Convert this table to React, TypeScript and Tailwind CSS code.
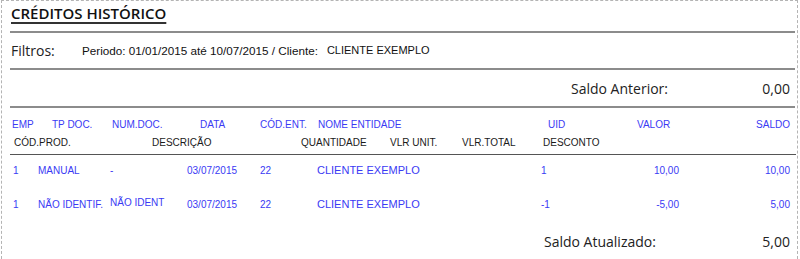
const blue = "text-[#3a3af4]";

type Col = { text: string; w?: string; cls?: string };

function Row({ cols, className }: { cols: Col[]; className?: string }) {
  return (
    <div className={`flex items-center ${className ?? ""}`}>
      {cols.map((c, i) => (
        <span key={i} className={`shrink-0 whitespace-nowrap ${c.w ?? ""} ${c.cls ?? ""}`}>
          {c.text}
        </span>
      ))}
    </div>
  );
}

function Rule() {
  return <div className="h-[2px] bg-[#8c8c8c] ml-[8px] mr-[2px]" />;
}

const rows = [
  { emp: "1", tp: "MANUAL", num: "-", data: "03/07/2015", ent: "22", nome: "CLIENTE EXEMPLO", uid: "1", valor: "10,00", saldo: "10,00", raise: false },
  { emp: "1", tp: "NÃO IDENTIF.", num: "NÃO IDENT", data: "03/07/2015", ent: "22", nome: "CLIENTE EXEMPLO", uid: "-1", valor: "-5,00", saldo: "5,00", raise: true },
];

export default function App() {
  return (
    <div className="w-[800px] h-[259px] bg-white overflow-hidden font-['Liberation_Sans',Arial,sans-serif]">
      <div className="ml-[1px] w-[797px] h-[259px] border-x border-t border-dashed border-[#b4b4b4]">
        {/* title */}
        <div className="h-[30px] pl-[9px] pt-[1px]">
          <span className="font-['Open_Sans',sans-serif] font-semibold text-[15px] text-[#111] underline decoration-[#333] decoration-[1.5px] underline-offset-[3px]">
            CRÉDITOS HISTÓRICO
          </span>
        </div>
        <Rule />

        {/* filtros */}
        <div className="h-[35px] flex items-center pl-[9px]">
          <span className="w-[71px] font-['Open_Sans',sans-serif] text-[14px] text-[#222]">Filtros:</span>
          <span className="text-[11.7px] text-[#111]">Periodo: 01/01/2015 até 10/07/2015 / Cliente:</span>
          <span className="ml-[9px] text-[11px] text-[#111]">CLIENTE EXEMPLO</span>
        </div>
        <Rule />

        {/* saldo anterior */}
        <div className="h-[36px] flex items-center font-['Open_Sans',sans-serif] text-[14px] text-[#222] pr-[7px]">
          <span className="ml-[569px]">Saldo Anterior:</span>
          <span className="ml-auto">0,00</span>
        </div>
        <Rule />

        {/* column headers */}
        <div className="pt-[9px] text-[10px] pl-[10px] pr-[7px]">
          <Row
            className={`h-[14px] ${blue}`}
            cols={[
              { text: "EMP", w: "w-[40px]" },
              { text: "TP DOC.", w: "w-[60px]" },
              { text: "NUM.DOC.", w: "w-[88px]" },
              { text: "DATA", w: "w-[60px]" },
              { text: "CÓD.ENT.", w: "w-[58px]" },
              { text: "NOME ENTIDADE", w: "w-[230px]" },
              { text: "UID", w: "w-[89px]" },
              { text: "VALOR", w: "w-[40px]" },
              { text: "SALDO", w: "flex-1", cls: "text-right" },
            ]}
          />
          <Row
            className="h-[14px] mt-[4px] text-[#1a1a1a]"
            cols={[
              { text: "", w: "w-[2px]" },
              { text: "CÓD.PROD.", w: "w-[138px]" },
              { text: "DESCRIÇÃO", w: "w-[149px]" },
              { text: "QUANTIDADE", w: "w-[89px]" },
              { text: "VLR UNIT.", w: "w-[72px]" },
              { text: "VLR.TOTAL", w: "w-[81px]" },
              { text: "DESCONTO" },
            ]}
          />
        </div>
        <div className="h-px bg-[#555] mt-[5px] ml-[8px] mr-[1px]" />

        {/* data */}
        <div className={`pl-[11px] pr-[7px] ${blue}`}>
          {rows.map((r, i) => (
            <div key={i} className={`flex items-center h-[14px] text-[10px] ${i === 0 ? "mt-[8px]" : "mt-[20px]"}`}>
              <span className="w-[25px] shrink-0">{r.emp}</span>
              <span className="w-[72px] shrink-0 whitespace-nowrap">{r.tp}</span>
              <span className={`w-[77px] shrink-0 whitespace-nowrap ${r.raise ? "-translate-y-[2px]" : ""}`}>{r.num}</span>
              <span className="w-[73px] shrink-0">{r.data}</span>
              <span className="w-[57px] shrink-0">{r.ent}</span>
              <span className="w-[224px] shrink-0 text-[11px] whitespace-nowrap">{r.nome}</span>
              <span className="w-[60px] shrink-0">{r.uid}</span>
              <span className="w-[78px] shrink-0 text-right">{r.valor}</span>
              <span className="flex-1 text-right">{r.saldo}</span>
            </div>
          ))}
        </div>

        {/* saldo atualizado */}
        <div className="h-[18px] mt-[21px] flex items-center font-['Open_Sans',sans-serif] text-[14px] text-[#222] pr-[7px]">
          <span className="ml-[542px]">Saldo Atualizado:</span>
          <span className="ml-auto">5,00</span>
        </div>
      </div>
    </div>
  );
}
